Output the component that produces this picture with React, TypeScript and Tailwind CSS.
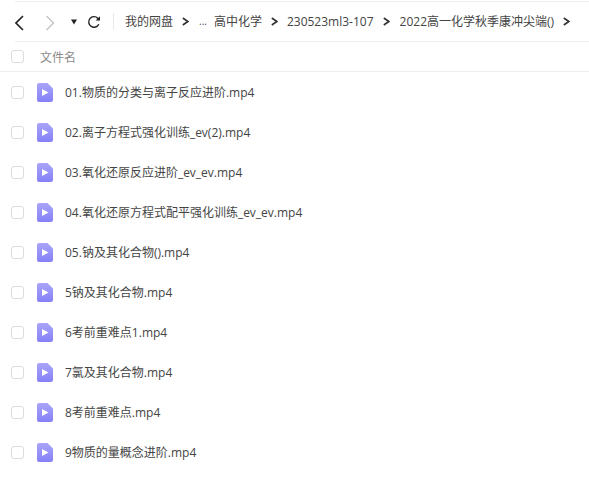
import React from "react";

const files = [
  "01.物质的分类与离子反应进阶.mp4",
  "02.离子方程式强化训练_ev(2).mp4",
  "03.氧化还原反应进阶_ev_ev.mp4",
  "04.氧化还原方程式配平强化训练_ev_ev.mp4",
  "05.钠及其化合物().mp4",
  "5钠及其化合物.mp4",
  "6考前重难点1.mp4",
  "7氯及其化合物.mp4",
  "8考前重难点.mp4",
  "9物质的量概念进阶.mp4",
];

const Chevron = ({ className }: { className?: string }) => (
  <svg width="7" height="9" viewBox="0 0 7 9" fill="none" className={className}>
    <path d="M0.8 1l5 3.5-5 3.5" stroke="#333" strokeWidth="1.6" />
  </svg>
);

const Box = () => <div className="w-[13px] h-[13px] rounded-[3px] border border-[#dcdcdc] bg-white shrink-0" />;

const FileIcon = () => (
  <svg width="16" height="19" viewBox="0 0 16 19" className="shrink-0">
    <defs>
      <linearGradient id="fileGrad" x1="0" y1="0" x2="0" y2="1">
        <stop offset="0" stopColor="#a9a4fb" />
        <stop offset="1" stopColor="#8581f8" />
      </linearGradient>
    </defs>
    <path d="M2 0h8.5L16 5.5V17a2 2 0 0 1-2 2H2a2 2 0 0 1-2-2V2a2 2 0 0 1 2-2z" fill="url(#fileGrad)" />
    <path d="M5 6l6.5 3.5L5 13z" fill="#fff" />
  </svg>
);

const Crumb = ({ children }: { children: React.ReactNode }) => <span className="whitespace-nowrap">{children}</span>;

export default function App() {
  return (
    <div className="w-[589px] h-[481px] bg-white overflow-hidden text-[12px] text-[#444] font-['Open_Sans','Noto_Sans_CJK_SC',sans-serif]">
      <div className="mt-px h-[41px] border-y border-[#efefef] flex items-center ml-[15px] mr-0">
        <svg width="9" height="16" viewBox="0 0 9 16" fill="none" className="shrink-0 mt-[2px]">
          <path d="M8 1L1 8l7 7" stroke="#222" strokeWidth="1.6" />
        </svg>
        <svg width="10" height="16" viewBox="0 0 10 16" fill="none" className="ml-[21px] shrink-0 mt-[2px]">
          <path d="M1.5 1l7 7-7 7" stroke="#c4c4c4" strokeWidth="1.4" />
        </svg>
        <svg width="6" height="6" viewBox="0 0 6 6" className="ml-[16px] shrink-0">
          <path d="M0 0.5h6L3 5.5z" fill="#222" />
        </svg>
        <svg width="14" height="14" viewBox="0 0 14 14" fill="none" className="ml-[10px] shrink-0">
          <path d="M11.8 9.2A5.3 5.3 0 1 1 10.8 3.2L12.3 4.8" stroke="#222" strokeWidth="1.4" />
          <path d="M13 1.2v4.4H8.6z" fill="#222" />
        </svg>
        <div className="ml-[12px] w-px h-[17px] bg-[#e8e8e8] shrink-0" />
        <div className="ml-[11px] flex items-center text-[#444] whitespace-nowrap">
          <Crumb>我的网盘</Crumb>
          <Chevron className="ml-[9px]" />
          <span className="ml-[10px] text-[10px]">...</span>
          <span className="ml-[7px]"><Crumb>高中化学</Crumb></span>
          <Chevron className="ml-[9px]" />
          <span className="ml-[9px]"><Crumb>230523ml3-107</Crumb></span>
          <Chevron className="ml-[9px]" />
          <span className="ml-[10px]"><Crumb>2022高一化学秋季康冲尖端()</Crumb></span>
          <Chevron className="ml-[9px]" />
        </div>
      </div>
      <div className="h-[30px] border-b border-[#efefef] flex items-center pl-[11px] text-[#8a8a8a]">
        <Box />
        <span className="ml-[16px] pt-[2px]">文件名</span>
      </div>
      <div>
        {files.map((f) => (
          <div key={f} className="h-[40px] flex items-center pl-[11px]">
            <Box />
            <div className="ml-[13px]"><FileIcon /></div>
            <span className="ml-[12px] pt-[2px] text-[#444] whitespace-nowrap">{f}</span>
          </div>
        ))}
      </div>
    </div>
  );
}
